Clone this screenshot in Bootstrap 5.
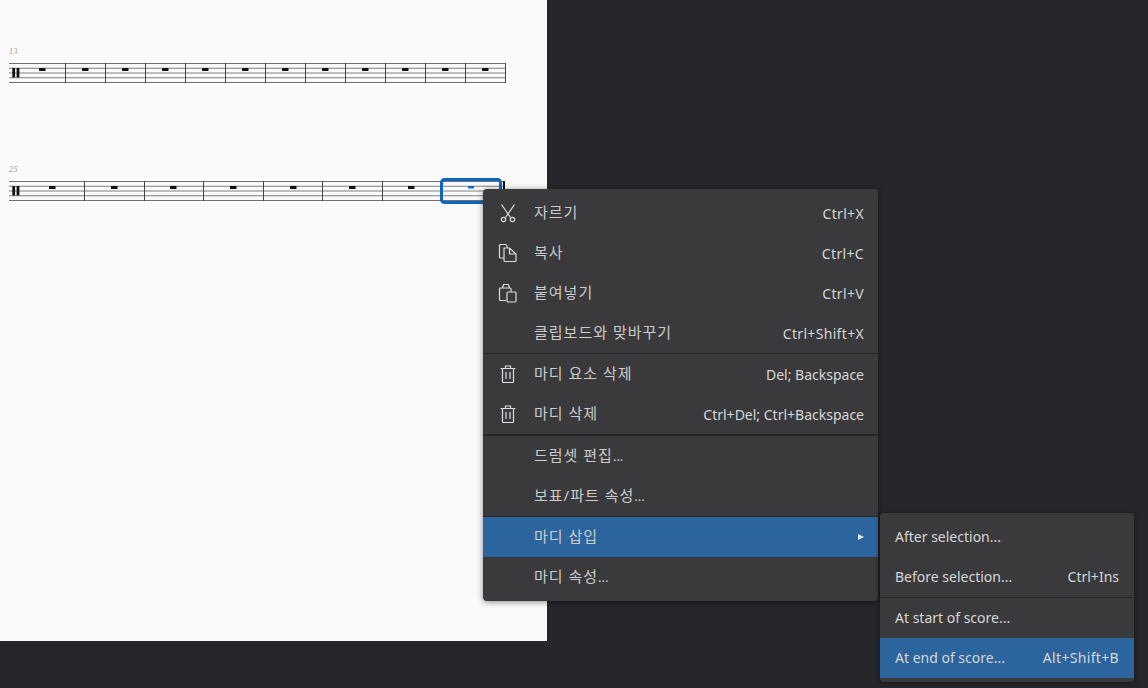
<!DOCTYPE html>
<html lang="ko">
  <head>
    <meta charset="UTF-8" />
    <meta name="viewport" content="width=device-width, initial-scale=1.0" />
    <title>Score</title>
    <link
      href="https://cdn.jsdelivr.net/npm/bootstrap@5.3.3/dist/css/bootstrap.min.css"
      rel="stylesheet"
    />
    <style>
      html,
      body {
        height: 100%;
      }
      body {
        background: #27262b;
        overflow: hidden;
        position: relative;
        font-family: "Noto Sans", "Noto Sans CJK KR", sans-serif;
        font-size: 14px;
        color: #d6d6d6;
      }
      .paper {
        width: 547px;
        height: 641px;
        background: #fafafa;
      }
      .paper svg {
        display: block;
      }
      .ctx-menu {
        position: absolute;
        background: #3a3a3c;
        border-radius: 4px;
        box-shadow: 0 1px 6px rgba(0, 0, 0, 0.45);
      }
      .ctx-main {
        left: 483px;
        top: 189px;
        width: 395px;
        padding: 4px 0;
      }
      .ctx-sub {
        left: 880px;
        top: 513px;
        width: 254px;
        padding: 4px 0;
      }
      .ctx-row {
        height: 40px;
        padding-right: 14px;
        white-space: nowrap;
      }
      .ctx-sub .ctx-row {
        padding-left: 15px;
        padding-right: 15px;
        padding-bottom: 2px;
      }
      .ctx-row.active-row {
        background: #2c659d;
      }
      .ctx-ico {
        width: 51px;
        flex: none;
        padding-left: 15px;
      }
      .ko-label {
        font-size: 15px;
        letter-spacing: 1px;
        color: #cbcbcb;
        margin-bottom: 2px;
      }
      .ko-dots {
        font-size: 13px;
        letter-spacing: 0;
      }
      .wide-keys {
        letter-spacing: 0.33px;
      }
      .ctx-line {
        height: 1px;
        background: #262628;
      }
      .ctx-line.thick {
        height: 2px;
      }
      .arrow-r {
        width: 0;
        height: 0;
        border-left: 6px solid #e8e8e8;
        border-top: 3.5px solid transparent;
        border-bottom: 3.5px solid transparent;
      }
    </style>
  </head>
  <body>
    <div class="paper">
      <svg id="score" width="547" height="641" xmlns="http://www.w3.org/2000/svg"></svg>
    </div>

    <div class="ctx-menu ctx-main">
      <div class="ctx-row d-flex align-items-center">
        <span class="ctx-ico d-flex">
          <svg width="20" height="20" viewBox="0 0 20 20" fill="none" stroke="#d8dde2" stroke-width="1.2">
            <path d="M3.500 1.500l9 13M16.500 1.500l-9 13" />
            <circle cx="5.500" cy="16.500" r="2.200" />
            <circle cx="14.500" cy="16.500" r="2.200" />
          </svg>
        </span>
        <span class="flex-grow-1 ko-label">자르기</span><span class="wide-keys">Ctrl+X</span>
      </div>
      <div class="ctx-row d-flex align-items-center">
        <span class="ctx-ico d-flex">
          <svg width="20" height="20" viewBox="0 0 20 20" fill="none" stroke="#d8dde2" stroke-width="1.2">
            <path d="M6 15H2.500a1 1 0 0 1-1-1V2.500a1 1 0 0 1 1-1H7a2 2 0 0 1 2 2V5" />
            <path d="M6 5h5.500L18 11v6.500a1 1 0 0 1-1 1H7a1 1 0 0 1-1-1zM11.500 5v6H18" />
          </svg>
        </span>
        <span class="flex-grow-1 ko-label">복사</span><span class="wide-keys">Ctrl+C</span>
      </div>
      <div class="ctx-row d-flex align-items-center">
        <span class="ctx-ico d-flex">
          <svg width="20" height="20" viewBox="0 0 20 20" fill="none" stroke="#d8dde2" stroke-width="1.2">
            <path d="M8 17.500H2.500a1 1 0 0 1-1-1V6a1 1 0 0 1 1-1H12a1 1 0 0 1 1 1v3" />
            <path d="M4.500 5l1-3.500h5l1 3.500" />
            <rect x="9" y="9" width="9" height="10" rx="1" />
          </svg>
        </span>
        <span class="flex-grow-1 ko-label">붙여넣기</span><span class="wide-keys">Ctrl+V</span>
      </div>
      <div class="ctx-row d-flex align-items-center">
        <span class="ctx-ico"></span>
        <span class="flex-grow-1 ko-label">클립보드와 맞바꾸기</span><span class="wide-keys">Ctrl+Shift+X</span>
      </div>
      <div class="ctx-line"></div>
      <div class="ctx-row d-flex align-items-center">
        <span class="ctx-ico d-flex">
          <svg width="20" height="20" viewBox="0 0 20 20" fill="none" stroke="#d8dde2" stroke-width="1.2">
            <path d="M2.500 4.500h15M7.500 4.500V2h5v2.500M4.500 4.500v13a1 1 0 0 0 1 1h9a1 1 0 0 0 1-1v-13M8 8v7M12 8v7" />
          </svg>
        </span>
        <span class="flex-grow-1 ko-label">마디 요소 삭제</span><span>Del; Backspace</span>
      </div>
      <div class="ctx-row d-flex align-items-center">
        <span class="ctx-ico d-flex">
          <svg width="20" height="20" viewBox="0 0 20 20" fill="none" stroke="#d8dde2" stroke-width="1.2">
            <path d="M2.500 4.500h15M7.500 4.500V2h5v2.500M4.500 4.500v13a1 1 0 0 0 1 1h9a1 1 0 0 0 1-1v-13M8 8v7M12 8v7" />
          </svg>
        </span>
        <span class="flex-grow-1 ko-label">마디 삭제</span><span>Ctrl+Del; Ctrl+Backspace</span>
      </div>
      <div class="ctx-line thick"></div>
      <div class="ctx-row d-flex align-items-center">
        <span class="ctx-ico"></span><span class="flex-grow-1 ko-label">드럼셋 편집<span class="ko-dots">...</span></span>
      </div>
      <div class="ctx-row d-flex align-items-center">
        <span class="ctx-ico"></span><span class="flex-grow-1 ko-label">보표/파트 속성<span class="ko-dots">...</span></span>
      </div>
      <div class="ctx-line"></div>
      <div class="ctx-row active-row d-flex align-items-center">
        <span class="ctx-ico"></span><span class="flex-grow-1 ko-label">마디 삽입</span><span class="arrow-r"></span>
      </div>
      <div class="ctx-row d-flex align-items-center">
        <span class="ctx-ico"></span><span class="flex-grow-1 ko-label">마디 속성<span class="ko-dots">...</span></span>
      </div>
    </div>

    <div class="ctx-menu ctx-sub">
      <div class="ctx-row d-flex align-items-center">
        <span class="flex-grow-1">After selection...</span>
      </div>
      <div class="ctx-row d-flex align-items-center">
        <span class="flex-grow-1">Before selection...</span><span>Ctrl+Ins</span>
      </div>
      <div class="ctx-line"></div>
      <div class="ctx-row d-flex align-items-center">
        <span class="flex-grow-1">At start of score...</span>
      </div>
      <div class="ctx-row active-row d-flex align-items-center">
        <span class="flex-grow-1">At end of score...</span><span class="wide-keys">Alt+Shift+B</span>
      </div>
    </div>

    <script src="https://cdn.jsdelivr.net/npm/bootstrap@5.3.3/dist/js/bootstrap.bundle.min.js"></script>
    <script>
      // draws the two staves of the score
      const systems = [
        { top: 63, num: "13", bars: [65, 105, 145, 185, 225, 265, 305, 345, 385, 425, 465, 505], rests: [42, 85, 125, 165, 205, 245, 285, 325, 365, 405, 445, 485] },
        { top: 181, num: "25", bars: [84, 144, 203, 263, 322, 382, 441], rests: [52, 114, 173, 233, 293, 352, 411] },
      ];
      let out = "";
      systems.forEach(function (s) {
        const end = s.bars[s.bars.length - 1] === 505 ? 505 : 503;
        for (let i = 0; i < 5; i++) {
          const y = s.top + i * 4.75 + 0.5;
          out += `<line x1="9" x2="${end}" y1="${y}" y2="${y}" stroke="${i == 0 || i == 4 ? "#707070" : "#808080"}" />`;
        }
        s.bars.forEach(function (x) {
          out += `<line x1="${x + 0.5}" x2="${x + 0.5}" y1="${s.top}" y2="${s.top + 20}" stroke="#444" />`;
        });
        s.rests.forEach(function (x) {
          out += `<rect x="${x - 3}" y="${s.top + 5}" width="6.500" height="3" fill="#111" />`;
        });
        out += `<rect x="12.300" y="${s.top + 5}" width="2.800" height="9.500" fill="#111" /><rect x="16.600" y="${s.top + 5}" width="2.800" height="9.500" fill="#111" />`;
        out += `<text x="9" y="${s.top - 9}" font-family="Liberation Serif" font-style="italic" font-size="8" letter-spacing="0.5" fill="#999">${s.num}</text>`;
      });
      // selected last bar
      out += `<rect x="503" y="181" width="2" height="21" fill="#111" />`;
      out += `<rect x="468" y="186" width="6" height="2.500" fill="#1769bd" />`;
      out += `<rect x="441.500" y="179.500" width="59" height="23" rx="3" fill="none" stroke="#0a66c2" stroke-width="3" />`;
      document.getElementById("score").innerHTML = out;
    </script>
  </body>
</html>
